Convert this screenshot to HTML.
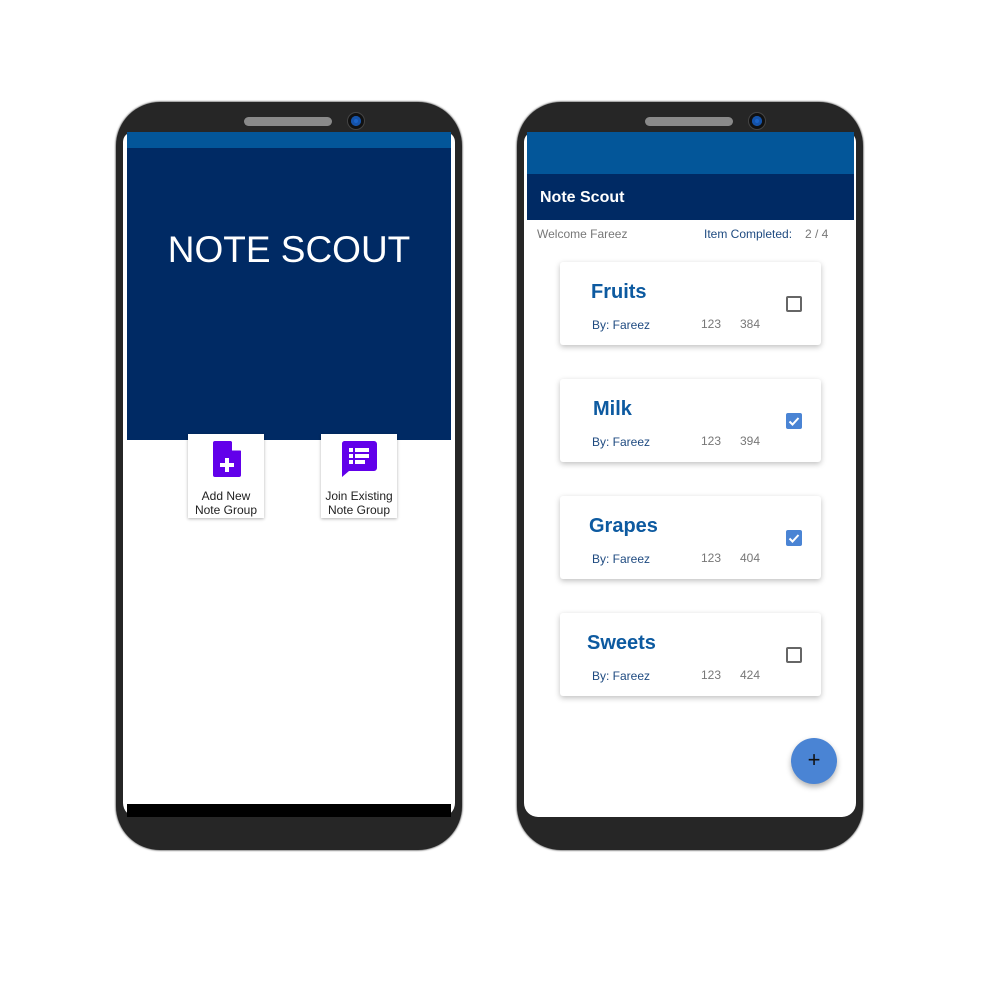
<!DOCTYPE html><html><head><style>
*{margin:0;padding:0;box-sizing:border-box}
body{width:1000px;height:1000px;background:#fff;position:relative;overflow:hidden;font-family:"Liberation Sans",Arial,sans-serif}
.a{position:absolute}
.phone{position:absolute;top:102px;width:346px;height:748px;background:#262626;border-radius:44px;box-shadow:0 0 2px #000}
.spk{position:absolute;top:15px;left:128px;width:88px;height:9px;border-radius:5px;background:#8a8a8a}
.cam{position:absolute;top:10px;left:231px;width:18px;height:18px;border-radius:50%;background:#111;border:1px solid #444}
.cam:after{content:"";position:absolute;left:3px;top:3px;width:10px;height:10px;border-radius:50%;background:#1a63c8;box-shadow:inset 0 0 0 3px #1552a8}
.screen{position:absolute;left:7px;top:30px;width:332px;height:685px;background:#fff;border-radius:10px 10px 14px 14px;overflow:hidden}
.card{position:absolute;left:560px;width:261px;height:83px;background:#fff;border-radius:3px;box-shadow:0 2px 6px rgba(0,0,0,.25)}
.card .t{position:absolute;top:19px;font-size:20px;font-weight:bold;color:#0d5aa0}
.card .by{position:absolute;left:32px;top:56px;font-size:12px;color:#1e4a80}
.card .n1{position:absolute;left:141px;top:55px;font-size:12px;color:#777}
.card .n2{position:absolute;left:180px;top:55px;font-size:12px;color:#777}
.cb{position:absolute;left:226px;top:34px;width:16px;height:16px;border:2px solid #666;border-radius:2px}
.cb.on{border:none;background:#4a84d4}
.btn{position:absolute;top:434px;width:76px;height:84px;background:#fff;box-shadow:0 1px 3px rgba(0,0,0,.3);text-align:center;font-size:12px;line-height:14px;color:#222}
</style></head><body>
<div class="phone" style="left:116px"><div class="spk"></div><div class="cam"></div>
<div class="screen"></div></div>
<div class="a" style="left:127px;top:132px;width:324px;height:16px;background:#035699"></div>
<div class="a" style="left:127px;top:148px;width:324px;height:292px;background:#002a64"></div>
<div class="a" style="left:127px;top:229px;width:324px;text-align:center;color:#fff;font-size:37px">NOTE SCOUT</div>
<div class="a" style="left:127px;top:804px;width:324px;height:13px;background:#000"></div>
<div class="btn" style="left:188px"><svg width="30" height="36" viewBox="0 0 30 36" style="margin-top:7px;margin-left:2px"><path d="M3 0h16l10 10v24a2 2 0 0 1-2 2H3a2 2 0 0 1-2-2V2a2 2 0 0 1 2-2z" fill="#6200ea"/><path d="M20 0l9 9.5h-9z" fill="#fff"/><path d="M15 17v14M8 24h14" stroke="#fff" stroke-width="4"/></svg><div style="margin-top:9px">Add New<br>Note Group</div></div>
<div class="btn" style="left:321px"><svg width="36" height="36" viewBox="0 0 36 36" style="margin-top:7px"><path d="M3 0h30a3 3 0 0 1 3 3v24a3 3 0 0 1-3 3H8l-7 6V3a3 3 0 0 1 2-3z" fill="#6200ea"/><rect x="8" y="7" width="4" height="4" fill="#fff"/><rect x="8" y="13" width="4" height="4" fill="#fff"/><rect x="8" y="19" width="4" height="4" fill="#fff"/><rect x="14" y="7" width="14" height="4" fill="#fff"/><rect x="14" y="13" width="14" height="4" fill="#fff"/><rect x="14" y="19" width="10" height="4" fill="#fff"/></svg><div style="margin-top:9px">Join Existing<br>Note Group</div></div>

<div class="phone" style="left:517px"><div class="spk"></div><div class="cam"></div>
<div class="screen"></div></div>
<div class="a" style="left:527px;top:132px;width:327px;height:42px;background:#035699"></div>
<div class="a" style="left:527px;top:174px;width:327px;height:46px;background:#002a64"></div>
<div class="a" style="left:540px;top:189px;color:#fff;font-size:16px;font-weight:bold">Note Scout</div>
<div class="a" style="left:537px;top:227px;color:#777;font-size:12px">Welcome Fareez</div>
<div class="a" style="left:704px;top:227px;color:#1e4a80;font-size:12px">Item Completed:</div>
<div class="a" style="left:805px;top:227px;color:#777;font-size:12px">2 / 4</div>
<div class="card" style="top:262px"><div class="t" style="left:31px">Fruits</div><div class="by">By: Fareez</div><div class="n1">123</div><div class="n2">384</div><div class="cb"></div></div>
<div class="card" style="top:379px"><div class="t" style="left:33px">Milk</div><div class="by">By: Fareez</div><div class="n1">123</div><div class="n2">394</div><div class="cb on"><svg width="16" height="16"><path d="M3.5 8.5l3 3 6-6.5" stroke="#fff" stroke-width="2" fill="none"/></svg></div></div>
<div class="card" style="top:496px"><div class="t" style="left:29px">Grapes</div><div class="by">By: Fareez</div><div class="n1">123</div><div class="n2">404</div><div class="cb on"><svg width="16" height="16"><path d="M3.5 8.5l3 3 6-6.5" stroke="#fff" stroke-width="2" fill="none"/></svg></div></div>
<div class="card" style="top:613px"><div class="t" style="left:27px">Sweets</div><div class="by">By: Fareez</div><div class="n1">123</div><div class="n2">424</div><div class="cb"></div></div>
<div class="a" style="left:791px;top:738px;width:46px;height:46px;border-radius:50%;background:#4a84d4;box-shadow:0 3px 6px rgba(0,0,0,.3);color:#111;font-size:22px;text-align:center;line-height:44px">+</div>
</body></html>
